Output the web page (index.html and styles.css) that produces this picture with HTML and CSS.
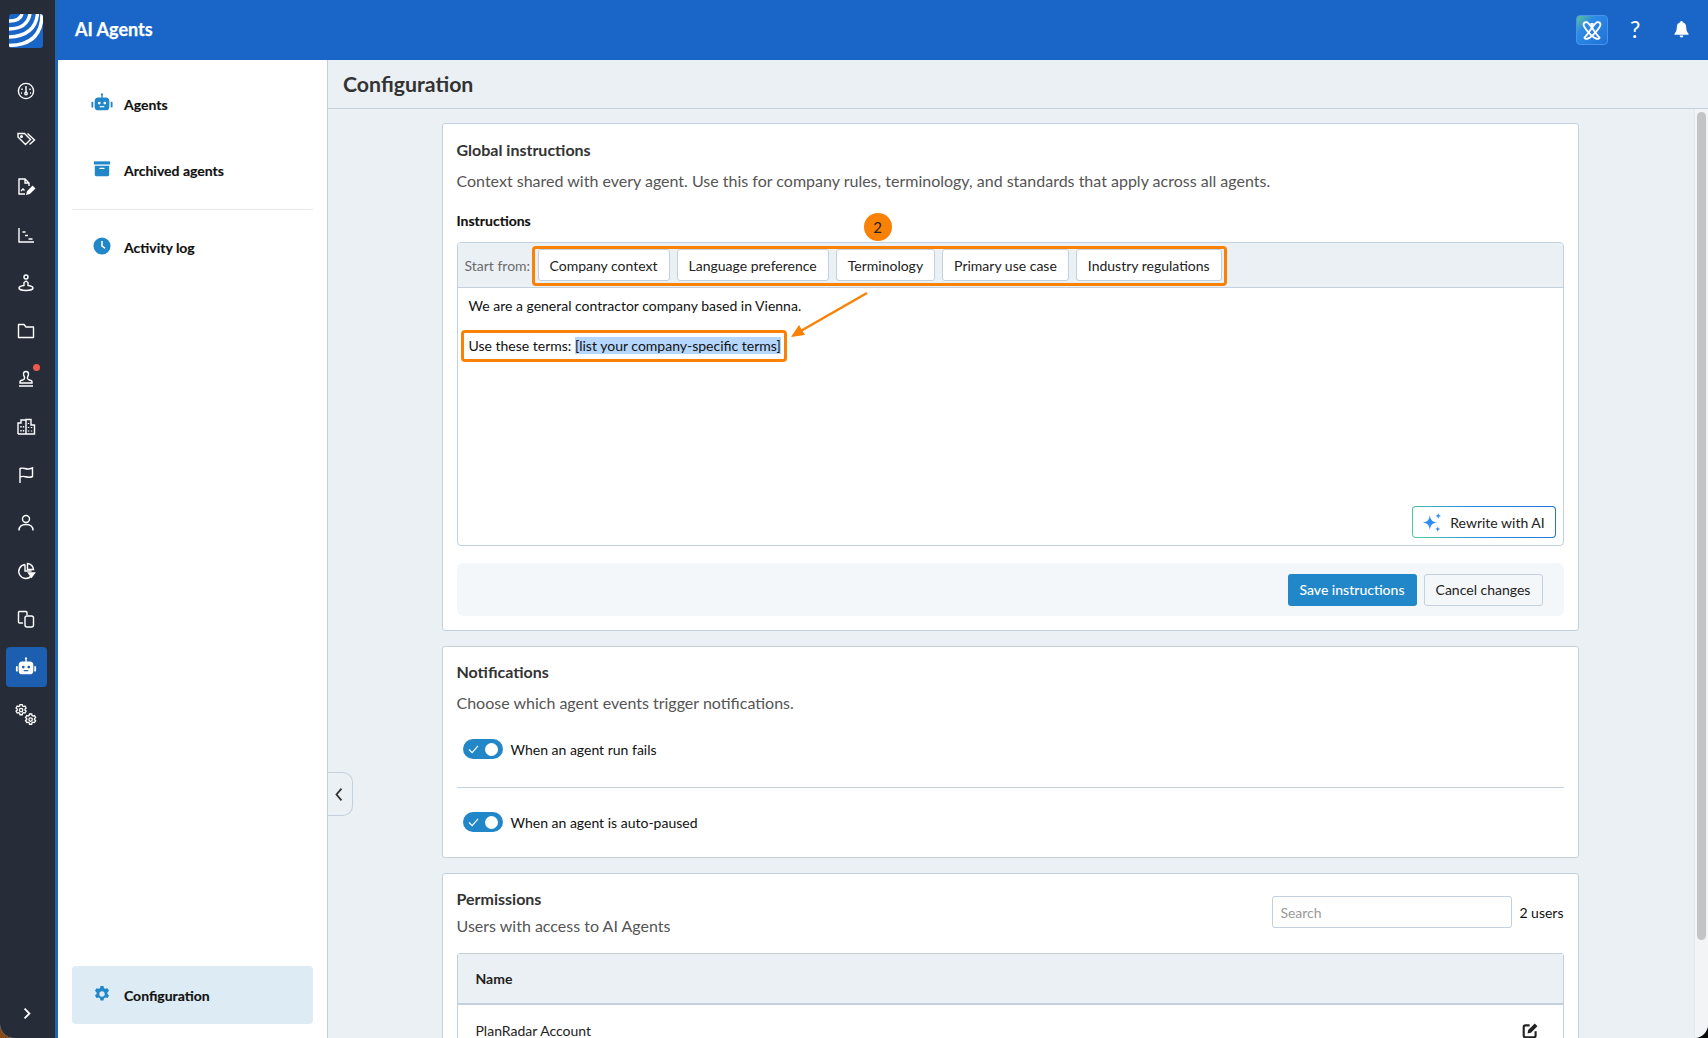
FILE: index.html
```html
<!DOCTYPE html>
<html lang="en">
<head>
<meta charset="utf-8">
<title>AI Agents</title>
<link rel="stylesheet" href="styles.css">
</head>
<body>
<div class="app">
  <nav class="rail">
    <div class="logo">
      <svg viewBox="0 0 34 34" width="34" height="34"><rect width="34" height="34" fill="#1a66c8"/><g fill="none" stroke="#fff" stroke-width="3.400"><path d="M0 7Q11 7 13 0"/><path d="M0 15Q18 15 21 0"/><path d="M0 23Q26 22 28.500 0"/><path d="M0 31.500Q33 31 33 0"/></g></svg>
    </div>
    <ul class="rail-list">
      <li class="rail-item"><svg class="ri" viewBox="0 0 20 20"><circle cx="10" cy="10" r="7.600"/><path d="M10 5v6M6 7.500v1.500M14 7.500v1.500M5 12h1M14 12h1"/><circle cx="10" cy="12.500" r="1.200"/></svg></li>
      <li class="rail-item"><svg class="ri" viewBox="0 0 20 20"><path d="M2 4.500h6.500l6 6-5 5-7.500-7.500zM11.500 4.500l7 6.500-5 4.500"/><circle cx="5.500" cy="7.500" r=".8"/></svg></li>
      <li class="rail-item"><svg class="ri" viewBox="0 0 20 20"><path d="M9 17H3V2h6l4 4v3M9 2v4h4M5 14l2-2 1.500 1.500"/><path d="M11 17l.6-2.500 5-5 1.900 1.900-5 5z" fill="#fff"/></svg></li>
      <li class="rail-item"><svg class="ri" viewBox="0 0 20 20"><path d="M3 3v14h15M6.500 7h3M9 10.500h3M12.500 14h4"/></svg></li>
      <li class="rail-item"><svg class="ri" viewBox="0 0 20 20"><circle cx="10" cy="4" r="2"/><path d="M8 13V9.500l2-1.500 2 1.500V13M8 12.500c-3 .4-5 1.300-5 2.500 0 1.300 3 2.500 7 2.500s7-1.200 7-2.500c0-1.200-2-2.100-5-2.500"/></svg></li>
      <li class="rail-item"><svg class="ri" viewBox="0 0 20 20"><path d="M2.500 16.500V3.500h5.500l2 2.500h7.500v10.500z" stroke-linejoin="round"/></svg></li>
      <li class="rail-item rail-badge"><svg class="ri" viewBox="0 0 20 20"><path d="M4 12.500c0-1.500 4-1 4.500-3 .5-2-1-2.500-1-4.500C7.500 3.500 8.500 2.500 10 2.500s2.500 1 2.500 2.500c0 2-1.500 2.500-1 4.500.5 2 4.500 1.500 4.500 3v1.500H4zM3 17h14"/></svg><span class="dot"></span></li>
      <li class="rail-item"><svg class="ri" viewBox="0 0 20 20"><path d="M2 17V6h3V3h5v3M10 17V2.500h5V8h3.500v9zM2 17h16.500M5 9v1.500M7.500 9v1.500M5 13v1.500M7.500 13v1.500M12.500 6v1M12.500 10v1M15.500 10v1M12.500 13.500v1M15.500 13.500v1"/></svg></li>
      <li class="rail-item"><svg class="ri" viewBox="0 0 20 20"><path d="M4 18V3M4 3.500c4-1.500 5 1 8.500.5 1.500-.2 3-.5 4-1v8.500c-3 1.500-5 .8-7 .2-2-.5-3.500-.5-5.500.3"/></svg></li>
      <li class="rail-item"><svg class="ri" viewBox="0 0 20 20"><circle cx="10" cy="6" r="3.500"/><path d="M3 17.500c0-4 3-6 7-6s7 2 7 6"/></svg></li>
      <li class="rail-item"><svg class="ri" viewBox="0 0 20 20"><path d="M9 3.500a7 7 0 1 0 6.500 11"/><path d="M9 3.500V10h6.500"/><path d="M11.500 2.500a7 7 0 0 1 6 6h-6z"/><path d="M12.500 12h6l-3 4z" fill="#fff"/></svg></li>
      <li class="rail-item"><svg class="ri" viewBox="0 0 20 20"><path d="M7 14H3.500c-.8 0-1-.5-1-1V3.500c0-.6.4-1 1-1h6.500c.6 0 1 .4 1 1V6"/><rect x="9" y="7" width="8.500" height="11" rx="2"/></svg></li>
      <li class="rail-item active"><span class="rail-pill"><svg viewBox="0 0 24 24" width="22" height="22" fill="#fff"><path d="M12 1.500a1.200 1.200 0 0 1 .7 2.200V6H16a4 4 0 0 1 4 4v6a4 4 0 0 1-4 4H8a4 4 0 0 1-4-4v-6a4 4 0 0 1 4-4h3.300V3.700A1.200 1.200 0 0 1 12 1.500z"/><rect x="1" y="11" width="2" height="6" rx="1"/><rect x="21" y="11" width="2" height="6" rx="1"/><circle cx="9" cy="12" r="1.500" fill="#1c5fb0"/><circle cx="15" cy="12" r="1.500" fill="#1c5fb0"/><path d="M9.500 16h5" stroke="#1c5fb0" stroke-width="1.300"/></svg></span></li>
      <li class="rail-item"><svg class="ri ri-wide" viewBox="0 0 22 22"><g transform="translate(-.5 -.5) scale(.66)" stroke-width="2"><path d="M8.300 1.500h3.400l.5 2.300 1.500.8 2.200-.8 1.700 3-1.700 1.500v1.700l1.700 1.600-1.700 2.900-2.200-.7-1.500.8-.5 2.400H8.300l-.5-2.400-1.500-.8-2.200.7-1.700-2.900 1.700-1.600V8.300L2.400 6.800l1.700-3 2.200.8 1.500-.8z"/><circle cx="10" cy="10" r="2.600"/></g><g transform="translate(9 9) scale(.66)" stroke-width="2"><path d="M8.300 1.500h3.400l.5 2.300 1.500.8 2.200-.8 1.700 3-1.700 1.500v1.700l1.700 1.600-1.700 2.900-2.200-.7-1.500.8-.5 2.400H8.300l-.5-2.400-1.500-.8-2.200.7-1.700-2.900 1.700-1.600V8.300L2.400 6.800l1.700-3 2.200.8 1.500-.8z"/><circle cx="10" cy="10" r="2.600"/></g></svg></li>
    </ul>
    <div class="rail-expand"><svg viewBox="0 0 12 16" width="10" height="13" fill="none" stroke="#fff" stroke-width="2.200"><path d="M3 2l6 6-6 6"/></svg></div>
  </nav>

  <div class="main">
    <header class="topbar">
      <h1 class="app-title">AI Agents</h1>
      <div class="top-actions">
        <span class="ai-btn"><svg viewBox="0 0 24 24" width="24" height="24" fill="none" stroke="#fff" stroke-width="1.900"><path d="M6 4c3-1 10 13 13 15 1.500 1-.5 2.500-3 1.500C12 19 3 9 3.500 6 3.700 5 5 4.300 6 4z"/><path d="M18 4c-3-1-10 13-13 15-1.500 1 .5 2.500 3 1.500C12 19 21 9 20.500 6 20.300 5 19 4.300 18 4z"/><rect x="10.500" y="5" width="3" height="3" fill="#fff" stroke="none"/></svg></span>
        <span class="help">?</span>
        <svg class="bell" viewBox="0 0 16 18" width="15" height="17" fill="#fff"><path d="M8 0c.8 0 1.300.6 1.300 1.300C11.800 2 13 4 13 6.500c0 4 1.500 5.500 2.500 7v1H.5v-1C1.500 12 3 10.500 3 6.500 3 4 4.200 2 6.700 1.300 6.700.6 7.200 0 8 0z"/><path d="M6 15.500h4a2 2 0 0 1-4 0z"/></svg>
      </div>
    </header>
    <div class="body">
      <aside class="side">
        <div class="side-top">
          <a class="side-link link-a"><svg class="si si-wide" viewBox="0 0 24 24" fill="#2287c9"><path d="M12 1.500a1.200 1.200 0 0 1 .7 2.200V6H16a4 4 0 0 1 4 4v6a4 4 0 0 1-4 4H8a4 4 0 0 1-4-4v-6a4 4 0 0 1 4-4h3.300V3.700A1.200 1.200 0 0 1 12 1.500z"/><rect x="0.500" y="10.500" width="2" height="6.500" rx="1"/><rect x="21.500" y="10.500" width="2" height="6.500" rx="1"/><circle cx="9" cy="12" r="1.500" fill="#fff"/><circle cx="15" cy="12" r="1.500" fill="#fff"/><path d="M9.500 16h5" stroke="#fff" stroke-width="1.300"/></svg><span>Agents</span></a>
          <a class="side-link link-b"><svg class="si" viewBox="0 0 20 20" fill="#2287c9"><rect x="1" y="1.500" width="18" height="3.500"/><path d="M2 6.500h16v10a1.500 1.500 0 0 1-1.500 1.500h-13A1.500 1.500 0 0 1 2 16.500z"/><rect x="7" y="8.500" width="6" height="1.500" rx=".7" fill="#fff"/></svg><span>Archived agents</span></a>
          <hr class="side-sep">
          <a class="side-link link-c"><svg class="si" viewBox="0 0 20 20"><circle cx="10" cy="10" r="9.500" fill="#2287c9"/><path d="M10 4.500V10l3.500 2.500" fill="none" stroke="#fff" stroke-width="1.700"/></svg><span>Activity log</span></a>
        </div>
        <a class="side-link side-active"><svg class="si" viewBox="0 0 20 20" fill="#2287c9"><path fill-rule="evenodd" d="M8.300 1h3.400l.5 2.500 1.500.8 2.400-.8 1.700 3-1.800 1.700v1.700l1.800 1.700-1.700 2.900-2.400-.7-1.500.8-.5 2.600H8.300l-.5-2.600-1.500-.8-2.400.7-1.700-2.900 1.800-1.700V8.200L2.200 6.500l1.700-3 2.400.8 1.500-.8zM10 7a3 3 0 1 0 0 6 3 3 0 0 0 0-6z"/></svg><span>Configuration</span></a>
      </aside>

      <div class="content">
        <span class="collapse"><svg viewBox="0 0 12 18" width="10" height="15" fill="none" stroke="#333" stroke-width="2.200"><path d="M9 2L3 9l6 7"/></svg></span>
        <div class="title-bar"><h2>Configuration</h2></div>
        <div class="scroller">
          <div class="cards">
            <section class="card card-global">
              <h3>Global instructions</h3>
              <p class="desc">Context shared with every agent. Use this for company rules, terminology, and standards that apply across all agents.</p>
              <div class="label">Instructions</div>
              <div class="editor">
                <div class="toolbar">
                  <span class="start">Start from:</span>
                  <div class="chips">
                    <button class="chip">Company context</button>
                    <button class="chip">Language preference</button>
                    <button class="chip">Terminology</button>
                    <button class="chip">Primary use case</button>
                    <button class="chip">Industry regulations</button>
                    <span class="anno-box anno-chips"></span>
                    <span class="anno-num">2</span>
                  </div>
                </div>
                <div class="editor-body">
                  <p class="line">We are a general contractor company based in Vienna.</p>
                  <p class="line line-two">Use these terms: <mark class="sel">[list your company-specific terms]</mark><span class="anno-box anno-line"></span></p>
                  <svg class="anno-arrow" viewBox="0 0 80 50" width="80" height="50"><path d="M76 2L8 41" stroke="#f98106" stroke-width="2.500" fill="none"/><path d="M0 46l14-2-6-10z" fill="#f98106"/></svg>
                  <button class="rewrite"><svg viewBox="0 0 20 20" width="21" height="21" fill="#2f8df0"><path d="M7.500 3c.7 4.700 2.300 6.300 7 7-4.700.7-6.300 2.300-7 7-.7-4.700-2.300-6.300-7-7 4.700-.7 6.300-2.300 7-7z"/><path d="M15.500 1c.3 1.700 1 2.400 2.700 2.700-1.700.3-2.400 1-2.700 2.700-.3-1.700-1-2.400-2.700-2.700 1.700-.3 2.400-1 2.700-2.700z"/><path d="M15 13.500c.3 1.700 1 2.400 2.700 2.700-1.700.3-2.400 1-2.700 2.700-.3-1.700-1-2.400-2.700-2.700 1.700-.3 2.400-1 2.700-2.700z"/></svg>Rewrite with AI</button>
                </div>
              </div>
              <div class="actions">
                <button class="btn btn-primary">Save instructions</button>
                <button class="btn btn-plain">Cancel changes</button>
              </div>
            </section>

            <section class="card card-notif">
              <h3>Notifications</h3>
              <p class="desc">Choose which agent events trigger notifications.</p>
              <div class="toggle-row row-first"><span class="toggle"><svg viewBox="0 0 12 10" width="11" height="9" fill="none" stroke="#fff" stroke-width="1.300"><path d="M1 5l3.500 3.500L11 1"/></svg><i></i></span>When an agent run fails</div>
              <hr class="notif-sep">
              <div class="toggle-row"><span class="toggle"><svg viewBox="0 0 12 10" width="11" height="9" fill="none" stroke="#fff" stroke-width="1.300"><path d="M1 5l3.500 3.500L11 1"/></svg><i></i></span>When an agent is auto-paused</div>
            </section>

            <section class="card card-perm">
              <div class="perm-head">
                <div>
                  <h3>Permissions</h3>
                  <p class="desc">Users with access to AI Agents</p>
                </div>
                <div class="perm-tools">
                  <input class="search" type="text" placeholder="Search">
                  <span class="count">2 users</span>
                </div>
              </div>
              <div class="table">
                <div class="thead">Name</div>
                <div class="trow"><span>PlanRadar Account</span><svg viewBox="0 0 20 20" width="17" height="17" fill="none" stroke="#222" stroke-width="2.500"><path d="M16 11v5a2 2 0 0 1-2 2H4a2 2 0 0 1-2-2V6a2 2 0 0 1 2-2h5"/><path d="M6.500 13.500l.8-4L15 1.800l3.200 3.200-7.700 7.700z" fill="#222" stroke="none"/></svg></div>
              </div>
            </section>
          </div>
        </div>
        <div class="scrollbar"><span></span></div>
      </div>
    </div>
  </div>
</div>
</body>
</html>
```

FILE: styles.css
```css
* { box-sizing: border-box; }
html, body { margin: 0; height: 100%; overflow: hidden; }
body {
  background: linear-gradient(90deg, #8a4a12 0 50%, #0a0a0a 50% 100%);
  font-family: Lato, "Noto Sans", sans-serif;
  font-size: 14px;
  color: #111;
}
h1, h2, h3, p, ul { margin: 0; padding: 0; }
button, input { font-family: inherit; }

.app {
  display: flex;
  width: 1708px;
  height: 1038px;
  border-radius: 0 0 14px 14px;
  overflow: hidden;
  background: #ebf0f4;
}

/* Rail */
.rail {
  position: relative;
  flex: 0 0 58px;
  background: #262d38;
  border-right: 3px solid #1c66b8;
  display: flex;
  flex-direction: column;
}
.logo { padding: 14px 0 0 9px; height: 67px; }
.logo svg { display: block; border-radius: 3px; }
.rail-list { list-style: none; }
.rail-item {
  position: relative;
  height: 48px;
  display: flex;
  align-items: center;
  justify-content: center;
  padding-right: 3px;
}
.ri { width: 20px; height: 20px; fill: none; stroke: #fff; stroke-width: 1.400; }
.ri-wide { width: 22px; height: 22px; }
.dot {
  position: absolute;
  left: 33px;
  top: 9px;
  width: 7px;
  height: 7px;
  border-radius: 50%;
  background: #ee5a4f;
}
.rail-pill {
  width: 41px;
  height: 40px;
  border-radius: 4px;
  background: #1c5fb0;
  display: flex;
  align-items: center;
  justify-content: center;
}
.rail-expand { margin-top: auto; height: 32px; padding-left: 22px; }

/* Main */
.main { flex: 1; min-width: 0; display: flex; flex-direction: column; }
.topbar {
  flex: 0 0 60px;
  background: #1a66c8;
  display: flex;
  align-items: center;
  padding: 0 19px 0 17px;
  color: #fff;
}
.app-title { font-size: 18px; font-weight: 700; margin-bottom: 2px; -webkit-text-stroke: .25px #fff; }
.top-actions { margin-left: auto; display: flex; align-items: center; }
.ai-btn {
  width: 32px;
  height: 30px;
  border-radius: 4px;
  border: 1px solid #4b93ea;
  background: linear-gradient(135deg, #5ec48e 0%, #2d8ae6 32%, #1f72d8 100%);
  display: flex;
  align-items: center;
  justify-content: center;
}
.help { margin: 0 0 2px 22px; font-size: 23px; font-weight: 400; width: 14px; }
.bell { margin: 0 0 2px 30px; }

.body { flex: 1; min-height: 0; display: flex; }

/* Sidebar */
.side {
  flex: 0 0 270px;
  background: #fff;
  border-right: 1px solid #c3d0dd;
  padding: 0 14px 14px;
  display: flex;
  flex-direction: column;
}
.side-top { flex: 1; }
.side-link {
  display: flex;
  align-items: center;
  font-size: 14px;
  font-weight: 700;
  color: #111;
  padding-left: 21px;
  -webkit-text-stroke: .15px #111;
}
.si { width: 18px; height: 18px; margin: 0 13px 3px 0; flex: none; }
.si-wide { width: 22px; height: 22px; margin: 0 11px 3px -2px; }
.link-a { height: 44px; margin-top: 22px; }
.link-b { height: 44px; margin-top: 22px; }
.side-sep { border: 0; border-top: 1px solid #e6eaee; margin: 17px 0 0; }
.link-c { height: 44px; margin-top: 15px; }
.side-active {
  height: 58px;
  background: #dcebf4;
  border-radius: 4px;
}

/* Content */
.content { position: relative; flex: 1; min-width: 0; display: flex; flex-direction: column; }
.collapse {
  position: absolute;
  left: 0;
  top: 712px;
  width: 25px;
  height: 44px;
  background: #ebf0f4;
  border: 1px solid #c3d0dd;
  border-left: 0;
  border-radius: 0 10px 10px 0;
  display: flex;
  align-items: center;
  justify-content: center;
  padding-right: 2px;
  z-index: 2;
}
.title-bar {
  flex: 0 0 49px;
  border-bottom: 1px solid #c3d0dd;
  display: flex;
  align-items: center;
  padding: 0 15px 1px;
}
.title-bar h2 { font-size: 21.300px; font-weight: 700; color: #333; }
.scroller { flex: 1; min-height: 0; overflow: hidden; padding: 14px 16px 0 0; }
.scrollbar {
  position: absolute;
  right: 0;
  top: 49px;
  bottom: 0;
  width: 14px;
  background: #f2f4f6;
  border-left: 1px solid #e6e8ea;
  padding: 3px 2px;
}
.scrollbar span {
  display: block;
  width: 9px;
  height: 828px;
  border-radius: 5px;
  background: #c4c4c4;
}
.cards { width: 1137px; margin: 0 auto; display: flex; flex-direction: column; gap: 15px; }
.card {
  background: #fff;
  border: 1px solid #c3d0dd;
  border-radius: 3px;
  padding: 16px 14px 14px;
}
.card h3 { font-size: 16px; font-weight: 700; color: #333; line-height: 20px; }
.desc { font-size: 16px; color: #555; line-height: 20px; margin-top: 11px; }
.label { font-size: 14px; font-weight: 700; margin-top: 20px; line-height: 20px; color: #111; -webkit-text-stroke: .15px #111; }

/* Editor */
.editor { margin-top: 11px; border: 1px solid #c3d0dd; border-radius: 4px; height: 304px; display: flex; flex-direction: column; }
.toolbar {
  flex: 0 0 45px;
  background: #ebf0f4;
  border-bottom: 1px solid #c3d0dd;
  border-radius: 3px 3px 0 0;
  display: flex;
  align-items: center;
  padding: 0 0 0 7px;
}
.start { font-size: 14px; color: #6b6b6b; width: 73px; flex: none; }
.chips { position: relative; display: flex; gap: 7px; }
.chip {
  height: 32px;
  padding: 0 11px;
  font-size: 14px;
  color: #222;
  background: #fff;
  border: 1px solid #c3d0dd;
  border-radius: 3px;
}
.anno-box { position: absolute; border: 3px solid #f98106; border-radius: 4px; pointer-events: none; }
.anno-chips { left: -6px; top: -3px; right: -5px; bottom: -5px; }
.anno-num {
  position: absolute;
  left: 326px;
  top: -36px;
  width: 28px;
  height: 28px;
  border-radius: 50%;
  background: #f98106;
  text-align: center;
  line-height: 28px;
  font-size: 15px;
  color: #222;
}
.editor-body { position: relative; flex: 1; padding: 0 11px; }
.line { font-size: 14px; line-height: 20px; color: #111; padding-top: 8px; }
.line-two { position: relative; display: inline-block; padding-top: 0; margin-top: 20px; }
.sel { background: #b5d7fd; color: #111; }
.anno-line { left: -8px; top: -6px; right: -6px; bottom: -6px; }
.anno-arrow { position: absolute; left: 333px; top: 3px; }
.rewrite {
  position: absolute;
  right: 7px;
  bottom: 7px;
  width: 144px;
  height: 32px;
  display: flex;
  align-items: center;
  justify-content: center;
  gap: 7px;
  font-size: 14px;
  color: #222;
  background: linear-gradient(#fff, #fff) padding-box, linear-gradient(60deg, #58d09a 0%, #2d8ae6 45%, #1f72d8 100%) border-box;
  border: 1px solid transparent;
  border-radius: 4px;
}
.actions {
  margin-top: 17px;
  height: 53px;
  background: #f4f7fa;
  border-radius: 6px;
  display: flex;
  align-items: center;
  justify-content: flex-end;
  gap: 7px;
  padding-right: 21px;
}
.btn { height: 32px; font-size: 14px; border-radius: 3px; }
.btn-primary { width: 129px; background: #2287c9; color: #fff; border: 0; font-weight: 500; }
.btn-plain { width: 119px; background: transparent; color: #222; border: 1px solid #c3d0dd; }

/* Notifications */
.card-notif { padding-top: 15px; padding-bottom: 0; height: 212px; }
.toggle-row { display: flex; align-items: center; font-size: 14px; color: #111; height: 20px; padding-left: 6px; }
.row-first { margin-top: 26px; }
.toggle {
  position: relative;
  width: 40px;
  height: 20px;
  border-radius: 10px;
  background: #2287c9;
  margin-right: 8px;
  flex: none;
  display: flex;
  align-items: center;
  padding-left: 5px;
}
.toggle i { position: absolute; right: 5px; top: 3.500px; width: 13px; height: 13px; border-radius: 50%; background: #fff; }
.notif-sep { border: 0; border-top: 1px solid #c3d0dd; margin: 28px 0 24px; }

/* Permissions */
.card-perm { padding-top: 15px; height: 300px; }
.perm-head { display: flex; justify-content: space-between; align-items: flex-start; }
.card-perm .desc { margin-top: 7px; }
.perm-tools { display: flex; align-items: center; gap: 7px; margin-top: 7px; }
.search {
  width: 240px;
  height: 32px;
  border: 1px solid #c3d0dd;
  border-radius: 3px;
  padding: 0 7px;
  font-size: 14px;
  color: #222;
  outline: none;
}
.search::placeholder { color: #9a9a9a; }
.count { font-size: 14px; color: #111; }
.table { margin-top: 17px; border: 1px solid #c3d0dd; border-radius: 3px; }
.thead {
  height: 51px;
  background: #ebf0f4;
  border-bottom: 2px solid #c3d0dd;
  display: flex;
  align-items: center;
  padding-left: 18px;
  font-weight: 700;
  color: #222;
}
.trow {
  height: 50px;
  display: flex;
  align-items: center;
  justify-content: space-between;
  padding: 0 24px 0 18px;
  color: #222;
}
```
